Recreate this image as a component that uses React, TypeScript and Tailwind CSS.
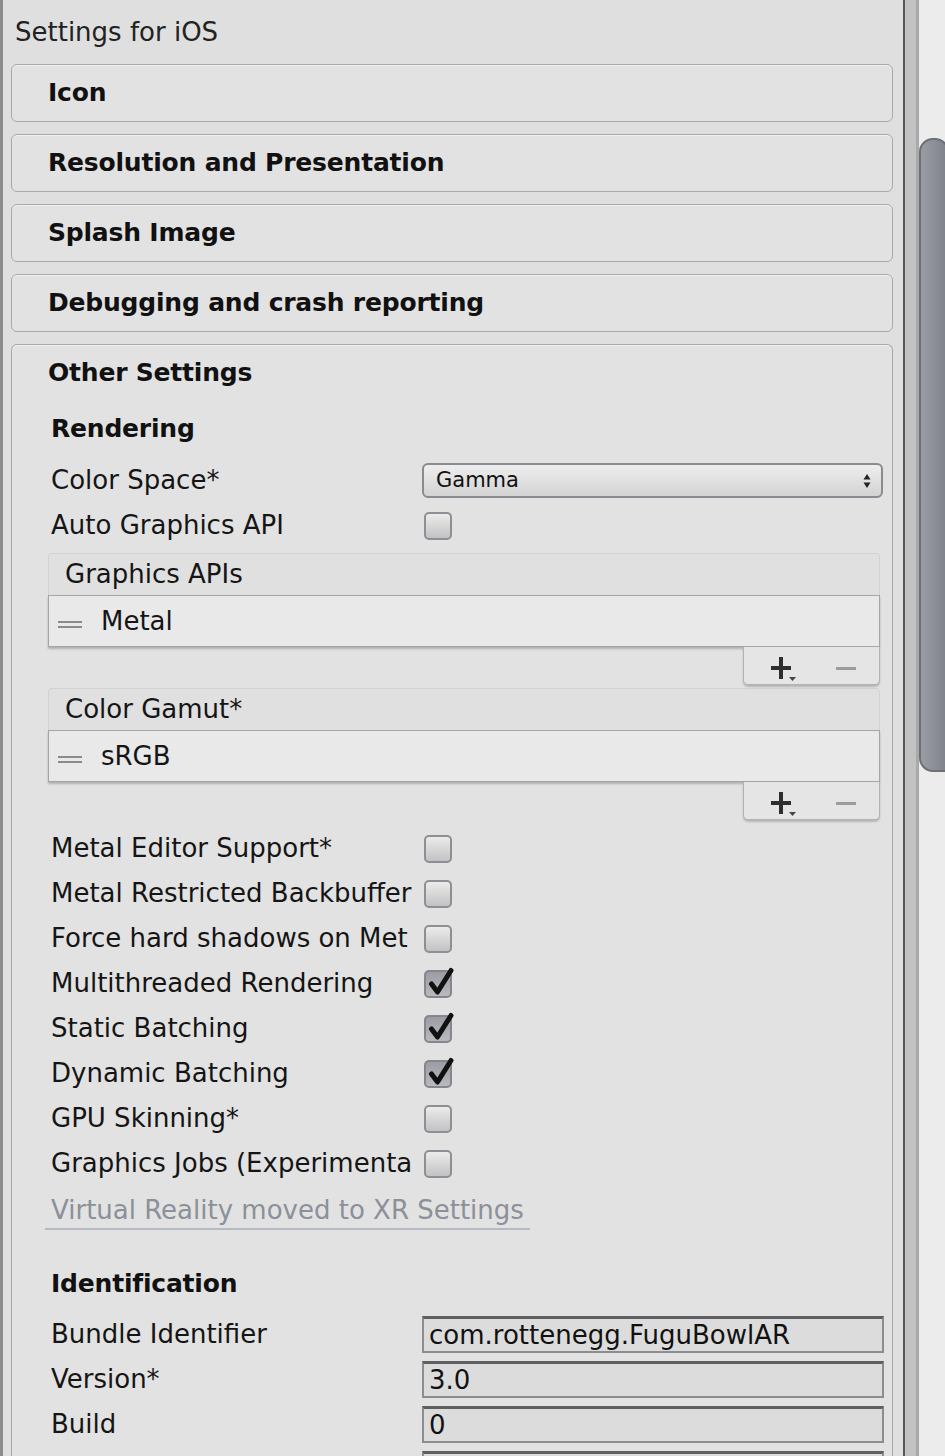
import React from "react"

const font = "font-['DejaVu_Sans',sans-serif]"

function Foldout({ title }: { title: string }) {
  return (
    <div className="mb-[12px] ml-[8px] mr-[10px] flex h-[58px] items-center rounded-[6px] border border-[#a9a9a9] bg-[#e2e2e2] pl-[36px] shadow-[inset_0_1px_0_#f0f0f0]">
      <span className="text-[25px] font-bold tracking-[-0.2px] text-[#111]">{title}</span>
    </div>
  )
}

function Checkbox({ checked = false }: { checked?: boolean }) {
  return (
    <div
      className={
        checked
          ? "relative ml-[2px] h-[28px] w-[28px] rounded-[5px] border-2 border-[#86878d] bg-linear-to-b from-[#9c9da4] to-[#b9bac0]"
          : "relative ml-[2px] h-[28px] w-[28px] rounded-[5px] border-2 border-[#8e8f94] bg-linear-to-b from-[#ececec] to-[#c2c2c4]"
      }
    >
      {checked && (
        <svg className="absolute left-[1px] top-[-6px]" width="28" height="31" viewBox="0 0 28 31">
          <path d="M4.5 18 L10.5 26 L24 4.5" fill="none" stroke="#111" strokeWidth="5" strokeLinecap="round" strokeLinejoin="round" />
        </svg>
      )}
    </div>
  )
}

function Row({ label, children }: { label: string; children?: React.ReactNode }) {
  return (
    <div className="flex h-[45px] items-center pl-[39px]">
      <div className="w-[371px] overflow-hidden whitespace-nowrap text-[26px] text-[#151515]">{label}</div>
      <div className="flex w-[462px] items-center">{children}</div>
    </div>
  )
}

function TextField({ value }: { value: string }) {
  return (
    <div className="flex h-[37px] w-[462px] items-center border-2 border-[#8d8d8f] border-t-[3px] border-t-[#5f5f62] bg-[#dcdcdc] px-[5px] text-[26px] text-[#111]">
      {value}
    </div>
  )
}

function ReorderList({ title, item }: { title: string; item: string }) {
  return (
    <div className="ml-[36px] mr-[12px]">
      <div className="flex h-[42px] items-center rounded-t-[4px] border border-b-0 border-[#d2d2d2] bg-[#e0e0e0] pl-[16px] text-[26px] text-[#151515]">
        {title}
      </div>
      <div className="flex h-[52px] items-center border border-[#a5a5a5] bg-[#e9e9e9] shadow-[0_2px_2px_rgba(0,0,0,0.22)]">
        <div className="ml-[9px] flex w-[24px] flex-col gap-[3px] pt-[6px]">
          <div className="h-[2px] bg-[#8a8a8a]" />
          <div className="h-[2px] bg-[#8a8a8a]" />
        </div>
        <span className="ml-[19px] text-[26px] text-[#151515]">{item}</span>
      </div>
      <div className="flex justify-end">
        <div className="relative h-[38px] w-[137px] rounded-b-[5px] border border-t-0 border-[#b2b2b2] bg-[#e5e5e5] shadow-[0_2px_2px_rgba(0,0,0,0.2)]">
          <svg className="absolute left-[26px] top-[10px]" width="28" height="26" viewBox="0 0 28 26">
            <path d="M11 0 V22 M1 11 H21" stroke="#2e2e2e" strokeWidth="4" />
            <path d="M19 20 H26 L22.5 24 Z" fill="#444" />
          </svg>
          <div className="absolute left-[92px] top-[20px] h-[3px] w-[20px] bg-[#9c9ca0]" />
        </div>
      </div>
    </div>
  )
}

export default function App() {
  return (
    <div className={`flex h-[1456px] w-[945px] overflow-hidden bg-[#dfdfdf] ${font}`}>
      <div className="w-[3px] shrink-0 bg-[#8b8b8b]" />

      <div className="w-[900px] shrink-0">
        <div className="flex h-[64px] items-center pl-[12px] text-[26px] text-[#222]">Settings for iOS</div>

        <Foldout title="Icon" />
        <Foldout title="Resolution and Presentation" />
        <Foldout title="Splash Image" />
        <Foldout title="Debugging and crash reporting" />

        {/* Other Settings */}
        <div className="ml-[8px] mr-[10px] rounded-t-[6px] border border-b-0 border-[#a9a9a9] bg-[#e2e2e2] shadow-[inset_0_1px_0_#f0f0f0]">
          <div className="flex h-[55px] items-center pl-[36px]">
            <span className="text-[25px] font-bold tracking-[-0.2px] text-[#111]">Other Settings</span>
          </div>
          <div className="flex h-[58px] items-center pl-[39px]">
            <span className="text-[25px] font-bold tracking-[-0.2px] text-[#111]">Rendering</span>
          </div>

          <Row label="Color Space*">
            <div className="flex h-[35px] w-[461px] items-center justify-between rounded-[6px] border-2 border-[#8a8b90] bg-linear-to-b from-[#eeeeee] to-[#d3d3d3] pl-[12px] pr-[10px] text-[21px] text-[#111]">
              <span>Gamma</span>
              <svg width="8" height="16" viewBox="0 0 8 16">
                <path d="M4 1 L7.5 6.5 H0.5 Z M4 15 L7.5 9.5 H0.5 Z" fill="#222" />
              </svg>
            </div>
          </Row>
          <Row label="Auto Graphics API">
            <Checkbox />
          </Row>

          <div className="mt-[5px]">
            <ReorderList title="Graphics APIs" item="Metal" />
          </div>
          <div className="mt-[3px]">
            <ReorderList title="Color Gamut*" item="sRGB" />
          </div>

          <div className="mt-[6px]">
            <Row label="Metal Editor Support*"><Checkbox /></Row>
            <Row label="Metal Restricted Backbuffer"><Checkbox /></Row>
            <Row label="Force hard shadows on Met"><Checkbox /></Row>
            <Row label="Multithreaded Rendering"><Checkbox checked /></Row>
            <Row label="Static Batching"><Checkbox checked /></Row>
            <Row label="Dynamic Batching"><Checkbox checked /></Row>
            <Row label="GPU Skinning*"><Checkbox /></Row>
            <Row label="Graphics Jobs (Experimenta"><Checkbox /></Row>
          </div>

          <div className="flex h-[45px] items-end pb-[1px] pl-[33px]">
            <div className="w-fit border-b-2 border-[#b6bac2] px-[6px] text-[26px] leading-[36px] text-[#8b9099]">
              Virtual Reality moved to XR Settings
            </div>
          </div>

          <div className="flex h-[81px] items-center pl-[39px] pt-[25px]">
            <span className="text-[25px] font-bold tracking-[-0.2px] text-[#111]">Identification</span>
          </div>

          <Row label="Bundle Identifier"><TextField value="com.rottenegg.FuguBowlAR" /></Row>
          <Row label="Version*"><TextField value="3.0" /></Row>
          <Row label="Build"><TextField value="0" /></Row>
          <Row label=""><TextField value="" /></Row>
        </div>
      </div>

      {/* scrollbar */}
      <div className="w-[2px] shrink-0 bg-[#55565a]" />
      <div className="w-[11px] shrink-0 bg-[#c2c2c2]" />
      <div className="w-[29px] shrink-0 border-l-[3px] border-[#a9a9ab] bg-[#ececec] pt-[138px]">
        <div className="h-[634px] w-[30px] rounded-l-[14px] rounded-tr-[14px] border-2 border-[#6c6f76] bg-linear-to-r from-[#9a9da4] to-[#7f828a]" />
      </div>
    </div>
  )
}
